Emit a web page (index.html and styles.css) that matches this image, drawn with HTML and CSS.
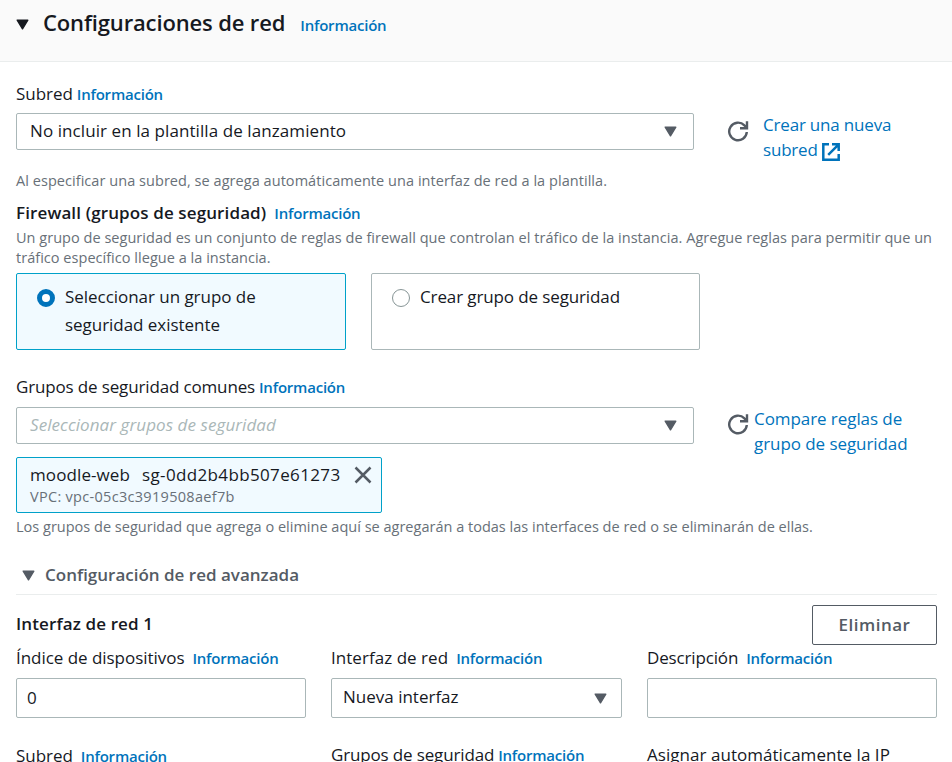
FILE: index.html
```html
<!DOCTYPE html>
<html lang="es">
<head>
<meta charset="utf-8">
<title>Configuraciones de red</title>
<link rel="stylesheet" href="styles.css">
</head>
<body>
<svg class="defs" aria-hidden="true">
  <symbol id="caret" viewBox="0 0 13 11"><path d="M1.2 1.2h10.6L6.5 9.8z" fill="currentColor" stroke="currentColor" stroke-width="1.4" stroke-linejoin="round"/></symbol>
  <symbol id="refresh" viewBox="0 0 22 22"><path d="M19.8 12a8.8 8.8 0 1 1-2.4-6.6l2.2 2.2M20 1.2v7h-7" fill="none" stroke="currentColor" stroke-width="2.4"/></symbol>
  <symbol id="external" viewBox="0 0 18 18"><path d="M7 1.3H1.3v15.4h15.4V11M10 1.3h6.7V8M16.2 1.8 6.2 11.8" fill="none" stroke="currentColor" stroke-width="2.5"/></symbol>
  <symbol id="close" viewBox="0 0 18 18"><path d="M1.5 1.5l15 15M16.5 1.5l-15 15" fill="none" stroke="currentColor" stroke-width="2.5"/></symbol>
</svg>

<header class="panel-header">
  <svg class="caret"><use href="#caret"/></svg>
  <h2 class="panel-title">Configuraciones de red</h2>
  <a class="info">Información</a>
</header>

<main class="panel-body">
  <section class="field-row">
    <div class="field">
      <div class="label">Subred<a class="info near">Información</a></div>
      <div class="select"><span class="subnet-value">No incluir en la plantilla de lanzamiento</span><svg class="caret"><use href="#caret"/></svg></div>
    </div>
    <div class="aside">
      <svg class="refresh"><use href="#refresh"/></svg>
      <a class="link new-subnet">Crear una nueva<br>subred <svg class="external"><use href="#external"/></svg></a>
    </div>
  </section>
  <p class="hint subnet-hint">Al especificar una subred, se agrega automáticamente una interfaz de red a la plantilla.</p>

  <h3 class="label strong firewall-title">Firewall (grupos de seguridad)<a class="info">Información</a></h3>
  <p class="hint">Un grupo de seguridad es un conjunto de reglas de firewall que controlan el tráfico de la instancia. Agregue reglas para permitir que un<br>tráfico específico llegue a la instancia.</p>

  <div class="tiles">
    <label class="tile selected"><span class="radio"></span><span>Seleccionar un grupo de<br>seguridad existente</span></label>
    <label class="tile"><span class="radio"></span><span class="tile-create">Crear grupo de seguridad</span></label>
  </div>

  <section class="field-row groups-row">
    <div class="field">
      <div class="label groups-label"><span class="tight">Grupos de seguridad comunes</span><a class="info near">Información</a></div>
      <div class="select"><span class="placeholder">Seleccionar grupos de seguridad</span><svg class="caret"><use href="#caret"/></svg></div>
    </div>
    <div class="aside aside-groups">
      <svg class="refresh"><use href="#refresh"/></svg>
      <a class="link compare">Compare reglas de<br>grupo de seguridad</a>
    </div>
  </section>

  <div class="token">
    <div>
      <div class="token-title"><span>moodle-web</span><span class="token-id">sg-0dd2b4bb507e61273</span></div>
      <div class="token-vpc">VPC: vpc-05c3c3919508aef7b</div>
    </div>
    <svg class="close"><use href="#close"/></svg>
  </div>
  <p class="hint token-hint">Los grupos de seguridad que agrega o elimine aquí se agregarán a todas las interfaces de red o se eliminarán de ellas.</p>

  <div class="advanced"><svg class="caret"><use href="#caret"/></svg><span>Configuración de red avanzada</span></div>

  <div class="interface-head">
    <h3 class="label strong">Interfaz de red 1</h3>
    <button class="button">Eliminar</button>
  </div>

  <div class="columns">
    <div>
      <div class="label">Índice de dispositivos<a class="info">Información</a></div>
      <div class="input">0</div>
    </div>
    <div>
      <div class="label loose">Interfaz de red<a class="info">Información</a></div>
      <div class="input drop"><span>Nueva interfaz</span><svg class="caret"><use href="#caret"/></svg></div>
    </div>
    <div>
      <div class="label"><span class="tight">Descripción</span><a class="info">Información</a></div>
      <div class="input"></div>
    </div>
    <div class="label">Subred<a class="info">Información</a></div>
    <div class="label raised"><span class="tight">Grupos de seguridad</span><a class="info near">Información</a></div>
    <div class="label raised loose">Asignar automáticamente la IP</div>
  </div>
</main>
</body>
</html>
```
FILE: styles.css
```css
* { box-sizing: border-box; }
html, body { height: 762px; margin: 0; overflow: hidden; }
body {
  background: #fff;
  color: #16191f;
  font: 17px/24px "Open Sans", "Noto Sans", sans-serif;
}
h2, h3, p { margin: 0; }
svg { flex: none; }
.defs { position: absolute; width: 0; height: 0; }
.caret { width: 13px; height: 11px; color: #545b64; }

.panel-header {
  display: flex;
  align-items: baseline;
  height: 62px;
  padding: 7px 16px 0;
  background: #fafafa;
  border-bottom: 1px solid #eaeded;
}
.panel-header .caret { color: #16191f; transform: translateY(-1px); }
.panel-title {
  margin-left: 14px;
  font-size: 22px;
  line-height: 30px;
  font-weight: 600;
  letter-spacing: -0.14px;
}
.panel-header .info { margin-left: 15px; }

.info {
  margin-left: 8px;
  color: #0073bb;
  font-size: 15px;
  font-weight: 600;
  letter-spacing: -0.22px;
}
.info.near { margin-left: 4px; }
.link { color: #0073bb; line-height: 25px; letter-spacing: -0.19px; }

.panel-body { padding: 20px 15px 0 16px; }
.field-row { display: flex; }
.field { width: 678px; }
.label { height: 24px; white-space: nowrap; letter-spacing: -0.04px; }
.strong { font-size: 17px; font-weight: 600; letter-spacing: 0.12px; }
.label .info { letter-spacing: -0.22px; }
.label .tight { letter-spacing: -0.15px; }
.loose { letter-spacing: 0.04px; }

.select {
  display: flex;
  align-items: center;
  justify-content: space-between;
  height: 37px;
  margin-top: 7px;
  padding: 0 16px 2px 13px;
  border: 1px solid #aab7b8;
  border-radius: 2px;
}
.select .caret { position: relative; top: 1px; }
.subnet-value { letter-spacing: 0.08px; }
.placeholder { color: #aab7b8; font-style: italic; letter-spacing: 0.08px; }

.aside { display: flex; padding: 30px 0 0 33px; }
.refresh { width: 22px; height: 22px; margin-top: 8px; color: #545b64; }
.new-subnet { margin-left: 14px; }
.external { width: 18px; height: 18px; vertical-align: -5px; }
.compare { margin-left: 5px; letter-spacing: -0.07px; }

.hint { color: #687078; font-size: 14.5px; line-height: 20px; letter-spacing: 0.03px; white-space: nowrap; }
.subnet-hint { margin-top: 9px; letter-spacing: 0.05px; }
.firewall-title { margin: 10px 0 3px; }

.tiles { display: grid; grid-template-columns: 330px 329px; gap: 25px; margin-top: 5px; }
.tile {
  display: flex;
  gap: 10px;
  height: 77px;
  padding: 9px 20px;
  border: 1px solid #aab7b8;
  border-radius: 2px;
  line-height: 28px;
  letter-spacing: -0.04px;
}
.tile.selected { background: #f1faff; border-color: #00a1c9; }
.radio {
  width: 18px;
  height: 18px;
  margin-top: 6px;
  border: 1px solid #879596;
  border-radius: 50%;
  background: #fff;
}
.selected .radio { border: 5.5px solid #0073bb; }
.tile-create { letter-spacing: -0.12px; }

.groups-row { margin-top: 25px; }
.groups-label { margin-bottom: 8px; }
.aside-groups { padding-top: 31px; }
.aside-groups .refresh { margin-top: 7px; }

.token {
  display: flex;
  justify-content: space-between;
  width: 366px;
  height: 56px;
  margin-top: 1px;
  padding: 5px 9px 0 13px;
  background: #f1faff;
  border: 1px solid #00a1c9;
  border-radius: 2px;
}
.token-title { display: flex; gap: 12px; letter-spacing: 0.1px; }
.token-id { letter-spacing: 0.36px; }
.token-vpc { color: #687078; font-size: 14.5px; line-height: 20px; letter-spacing: 0.3px; }
.close { width: 18px; height: 18px; margin-top: 3px; color: #545b64; }
.token-hint { margin-top: 4px; letter-spacing: 0.01px; }

.advanced {
  display: flex;
  align-items: center;
  gap: 10px;
  height: 58px;
  padding: 19px 0 0 6px;
  border-bottom: 1px solid #eaeded;
  color: #545b64;
  font-weight: 600;
}

.interface-head { display: flex; justify-content: space-between; height: 40px; margin-top: 10px; }
.interface-head .strong { margin-top: 7px; }
.button {
  width: 125px;
  height: 40px;
  padding: 0 0 1px;
  border: 1px solid #545b64;
  border-radius: 2px;
  background: #fff;
  color: #545b64;
  font: 600 17px/24px "Open Sans", sans-serif;
  letter-spacing: 0.5px;
}

.columns { display: grid; grid-template-columns: 290px 291px 290px; column-gap: 25px; row-gap: 25px; }
.columns .label { height: 25px; padding-top: 1px; }
.input {
  display: flex;
  align-items: center;
  height: 40px;
  margin-top: 8px;
  padding: 0 10px;
  border: 1px solid #aab7b8;
  border-radius: 2px;
}
.input.drop { justify-content: space-between; padding: 0 14px 2px 11px; }
.input.drop .caret { position: relative; top: 1px; }
.raised { margin-top: -1px; }
```
